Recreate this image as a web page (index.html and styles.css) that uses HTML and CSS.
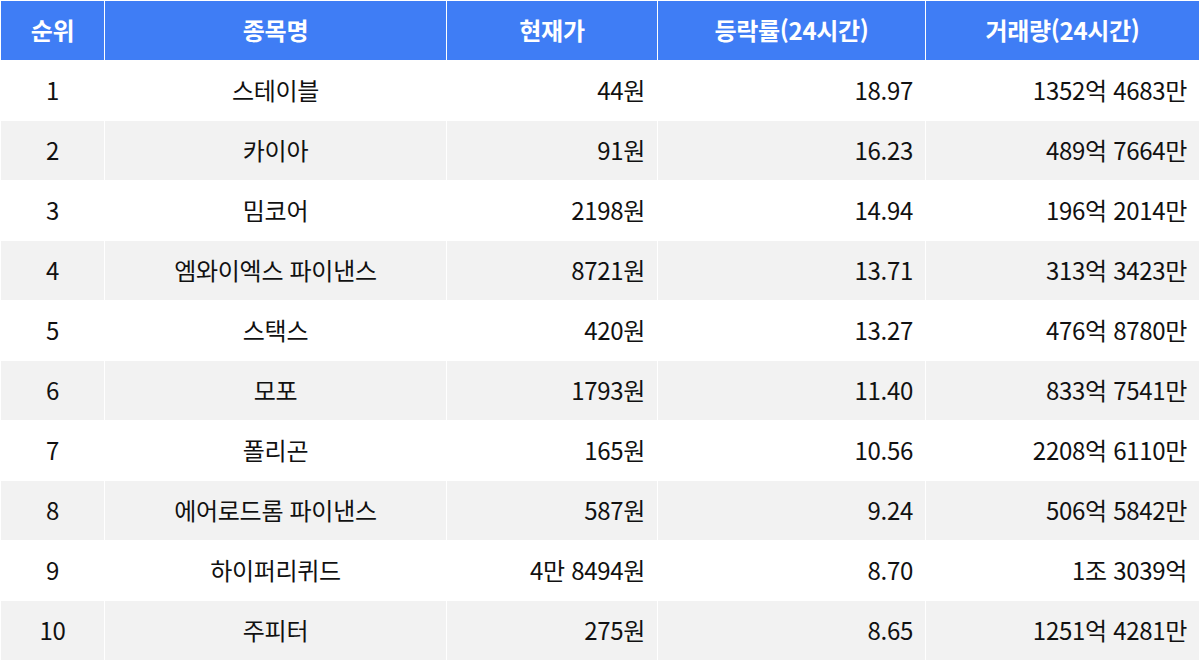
FILE: index.html
```html
<!DOCTYPE html>
<html lang="ko">
<head>
<meta charset="utf-8">
<link rel="stylesheet" href="styles.css">
</head>
<body>
<table class="rank">
  <colgroup>
    <col class="c-rank"><col class="c-name"><col class="c-price"><col class="c-change"><col class="c-vol">
  </colgroup>
  <thead>
    <tr><th>순위</th><th>종목명</th><th>현재가</th><th>등락률(24시간)</th><th>거래량(24시간)</th></tr>
  </thead>
  <tbody>
    <tr><td class="ctr">1</td><td class="ctr">스테이블</td><td class="num">44원</td><td class="num">18.97</td><td class="num">1352억 4683만</td></tr>
    <tr class="alt"><td class="ctr">2</td><td class="ctr">카이아</td><td class="num">91원</td><td class="num">16.23</td><td class="num">489억 7664만</td></tr>
    <tr><td class="ctr">3</td><td class="ctr">밈코어</td><td class="num">2198원</td><td class="num">14.94</td><td class="num">196억 2014만</td></tr>
    <tr class="alt"><td class="ctr">4</td><td class="ctr">엠와이엑스 파이낸스</td><td class="num">8721원</td><td class="num">13.71</td><td class="num">313억 3423만</td></tr>
    <tr><td class="ctr">5</td><td class="ctr">스택스</td><td class="num">420원</td><td class="num">13.27</td><td class="num">476억 8780만</td></tr>
    <tr class="alt"><td class="ctr">6</td><td class="ctr">모포</td><td class="num">1793원</td><td class="num">11.40</td><td class="num">833억 7541만</td></tr>
    <tr><td class="ctr">7</td><td class="ctr">폴리곤</td><td class="num">165원</td><td class="num">10.56</td><td class="num">2208억 6110만</td></tr>
    <tr class="alt"><td class="ctr">8</td><td class="ctr">에어로드롬 파이낸스</td><td class="num">587원</td><td class="num">9.24</td><td class="num">506억 5842만</td></tr>
    <tr><td class="ctr">9</td><td class="ctr">하이퍼리퀴드</td><td class="num">4만 8494원</td><td class="num">8.70</td><td class="num">1조 3039억</td></tr>
    <tr class="alt"><td class="ctr">10</td><td class="ctr">주피터</td><td class="num">275원</td><td class="num">8.65</td><td class="num">1251억 4281만</td></tr>
  </tbody>
</table>
</body>
</html>
```
FILE: styles.css
```css
html, body {
  margin: 0;
  padding: 0;
  background: #ffffff;
}
body {
  font-family: "Noto Sans CJK KR", "Noto Sans", sans-serif;
  color: #111111;
}
.rank {
  width: 1200px;
  table-layout: fixed;
  border-collapse: separate;
  border-spacing: 1px;
  background: #ffffff;
}
.c-rank { width: 103px; }
.c-name { width: 341px; }
.c-price { width: 210px; }
.c-change { width: 267px; }
.c-vol { width: 273px; }
.rank th, .rank td {
  height: 59px;
  padding: 0 12px 1px;
  box-sizing: border-box;
  font-size: 24px;
  line-height: 1;
  white-space: nowrap;
  letter-spacing: -0.3px;
}
.rank th {
  background: #3f7df5;
  color: #ffffff;
  font-weight: 700;
  text-align: center;
}
.rank td {
  background: #ffffff;
  font-weight: 400;
}
.rank tr.alt td {
  background: #f2f2f2;
}
.ctr { text-align: center; }
.num { text-align: right; }
```
